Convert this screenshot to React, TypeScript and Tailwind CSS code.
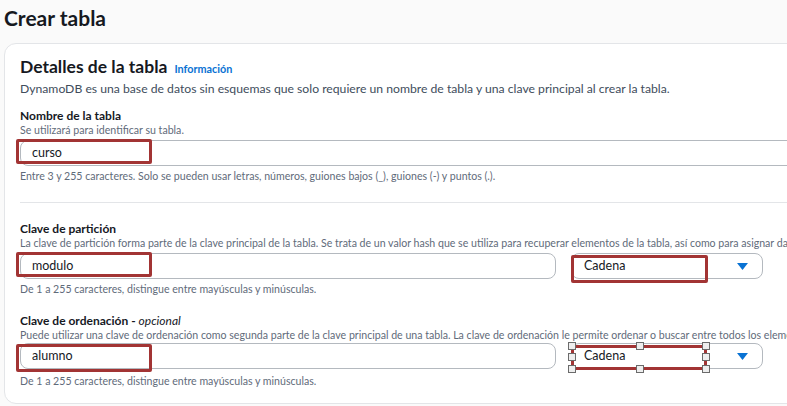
import React from 'react';

const font = { fontFamily: 'Lato, "Noto Sans", sans-serif' };

const Handle: React.FC<{ className: string }> = ({ className }) => (
  <span className={`absolute w-[8px] h-[8px] bg-[#eeeeee] border border-[#6b6b6b] ${className}`} />
);

const TextInput: React.FC<{ value: string; className?: string }> = ({ value, className = '' }) => (
  <div className={`relative h-[26px] rounded-[8px] border border-[#b4b9bf] bg-white flex items-center pl-[11px] ${className}`}>
    <span className="text-[12.5px] text-[#16191f]">{value}</span>
  </div>
);

const SelectBox: React.FC<{ handles?: boolean }> = ({ handles }) => (
  <div className="relative w-[192px] h-[26px] shrink-0 rounded-[8px] border border-[#b4b9bf] bg-white flex items-center justify-between pl-[12px] pr-[14px]">
    <span className="text-[12.5px] text-[#16191f]">Cadena</span>
    <svg width="11" height="7" viewBox="0 0 11 7">
      <path d="M0 0 H11 L5.5 7 Z" fill="#0972d3" />
    </svg>
    {handles ? (
      <div className="absolute left-[-1px] top-[1px] w-[136px] h-[25px] border-[3px] border-[#a23434]">
        <Handle className="left-[-6px] top-[-6px]" />
        <Handle className="left-[62px] top-[-6px]" />
        <Handle className="right-[-6px] top-[-6px]" />
        <Handle className="left-[-6px] top-[5px]" />
        <Handle className="right-[-6px] top-[5px]" />
        <Handle className="left-[-6px] bottom-[-6px]" />
        <Handle className="left-[62px] bottom-[-6px]" />
        <Handle className="right-[-6px] bottom-[-6px]" />
      </div>
    ) : (
      <div className="absolute left-[-1px] top-[1px] w-[137px] h-[28px] border-[3px] border-[#a23434] rounded-[2px]" />
    )}
  </div>
);

// red highlight drawn over the screenshot's text fields
const RedMark: React.FC<{ className?: string }> = ({ className = '' }) => (
  <div className={`absolute left-[-4px] w-[136px] border-[3px] border-[#a23434] rounded-[2px] ${className}`} />
);

const App: React.FC = () => {
  return (
    <div className="w-[787px] h-[406px] overflow-hidden bg-[#fafafa]" style={font}>
      <header className="h-[43px] pl-[4px] pt-[5px]">
        <h1 className="text-[21px] font-bold text-[#16191f] leading-[26px]">Crear tabla</h1>
      </header>

      <div className="ml-[4px] w-[830px] h-[361px] rounded-[12px] border border-[#e3e5e8] bg-white pl-[15px] pt-[11px]">
        <div className="flex items-baseline gap-[7px]">
          <h2 className="text-[17.5px] font-bold text-[#16191f] leading-[24px]">Detalles de la tabla</h2>
          <a className="text-[10.8px] font-bold text-[#0972d3]">Información</a>
        </div>
        <p className="text-[12.2px] text-[#414d5c] leading-[16px] mt-[2px]">
          DynamoDB es una base de datos sin esquemas que solo requiere un nombre de tabla y una clave principal al crear la tabla.
        </p>

        <div className="mt-[11px]">
          <div className="text-[12px] font-bold text-[#16191f] leading-[15px]">Nombre de la tabla</div>
          <div className="text-[10.6px] text-[#5f6b7a] leading-[15px]">Se utilizará para identificar su tabla.</div>
          <div className="relative mt-[2px]">
            <TextInput value="curso" className="w-[800px]" />
            <RedMark className="top-[-1px] h-[25px]" />
          </div>
          <div className="text-[10.6px] text-[#5f6b7a] leading-[15px] mt-[3px]">
            Entre 3 y 255 caracteres. Solo se pueden usar letras, números, guiones bajos (_), guiones (-) y puntos (.).
          </div>
        </div>

        <div className="mt-[18px] h-px bg-[#e3e5e8] w-[800px]" />

        <div className="mt-[18px]">
          <div className="text-[12px] font-bold text-[#16191f] leading-[15px]">Clave de partición</div>
          <div className="text-[10.6px] text-[#5f6b7a] leading-[15px] whitespace-nowrap">
            La clave de partición forma parte de la clave principal de la tabla. Se trata de un valor hash que se utiliza para recuperar elementos de la tabla, así como para asignar datos entre hosts para su escalabilidad y disponibilidad.
          </div>
          <div className="flex gap-[15px] mt-[2px]">
            <div className="relative">
              <TextInput value="modulo" className="w-[536px]" />
              <RedMark className="top-[-1px] h-[25px]" />
            </div>
            <SelectBox />
          </div>
          <div className="text-[10.6px] text-[#5f6b7a] leading-[15px] mt-[3px]">
            De 1 a 255 caracteres, distingue entre mayúsculas y minúsculas.
          </div>
        </div>

        <div className="mt-[16px]">
          <div className="text-[12px] font-bold text-[#16191f] leading-[15px]">
            Clave de ordenación - <span className="italic font-normal">opcional</span>
          </div>
          <div className="text-[10.6px] text-[#5f6b7a] leading-[15px] whitespace-nowrap">
            Puede utilizar una clave de ordenación como segunda parte de la clave principal de una tabla. La clave de ordenación le permite ordenar o buscar entre todos los elementos que comparten la misma clave de partición.
          </div>
          <div className="flex gap-[15px]">
            <div className="relative">
              <TextInput value="alumno" className="w-[536px]" />
              <RedMark className="top-[1px] h-[28px]" />
            </div>
            <SelectBox handles />
          </div>
          <div className="text-[10.6px] text-[#5f6b7a] leading-[15px] mt-[5px]">
            De 1 a 255 caracteres, distingue entre mayúsculas y minúsculas.
          </div>
        </div>
      </div>
    </div>
  );
};

export default App;
